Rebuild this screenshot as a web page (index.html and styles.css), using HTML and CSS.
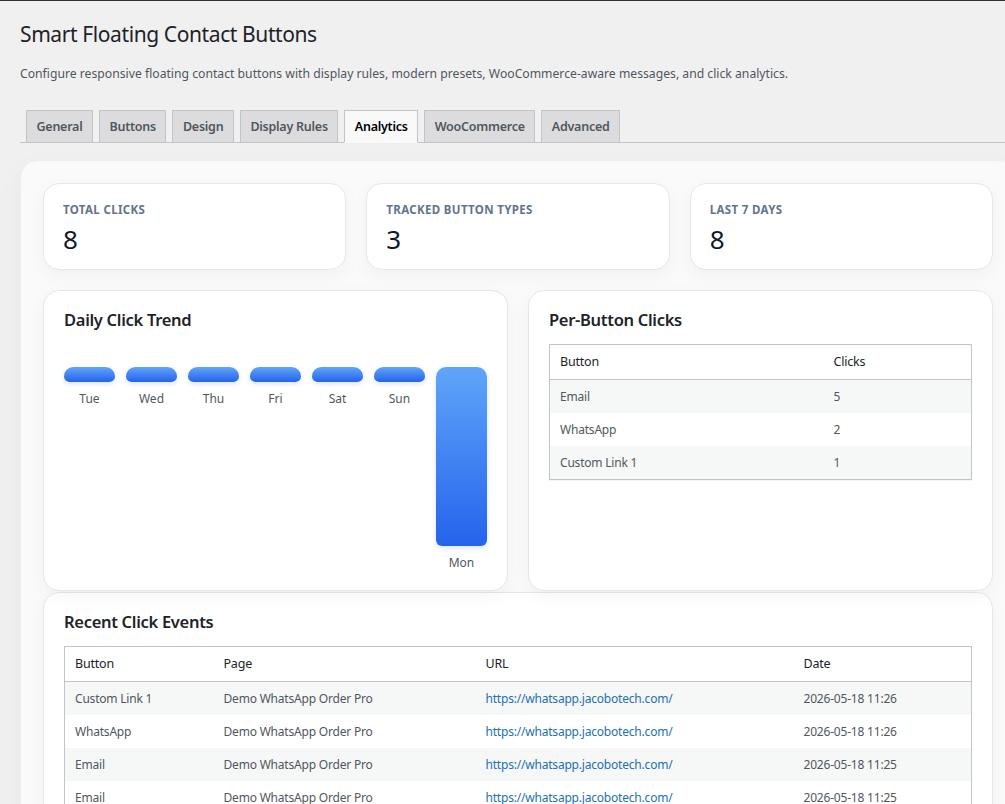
FILE: index.html
```html
<!DOCTYPE html>
<html lang="en">
<head>
    <meta charset="UTF-8">
    <meta name="viewport" content="width=device-width, initial-scale=1.0">
    <title>Smart Floating Contact Buttons</title>
    <link rel="stylesheet" href="styles.css">
</head>
<body>
    <div class="wrap">
        <h1>Smart Floating Contact Buttons</h1>
        <p class="intro">Configure responsive floating contact buttons with display rules, modern presets, WooCommerce-aware messages, and click analytics.</p>

        <nav class="nav-tab-wrapper">
            <a href="#" class="nav-tab">General</a>
            <a href="#" class="nav-tab">Buttons</a>
            <a href="#" class="nav-tab">Design</a>
            <a href="#" class="nav-tab">Display Rules</a>
            <a href="#" class="nav-tab nav-tab-active">Analytics</a>
            <a href="#" class="nav-tab">WooCommerce</a>
            <a href="#" class="nav-tab">Advanced</a>
        </nav>

        <div class="panel">
            <div class="stats">
                <div class="stat-card">
                    <div class="stat-label">Total Clicks</div>
                    <div class="stat-value">8</div>
                </div>
                <div class="stat-card">
                    <div class="stat-label">Tracked Button Types</div>
                    <div class="stat-value">3</div>
                </div>
                <div class="stat-card">
                    <div class="stat-label">Last 7 Days</div>
                    <div class="stat-value">8</div>
                </div>
            </div>

            <div class="two-col">
                <div class="card">
                    <h2>Daily Click Trend</h2>
                    <div class="chart">
                        <div class="chart-col"><div class="bar" style="height: 15px"></div><span>Tue</span></div>
                        <div class="chart-col"><div class="bar" style="height: 15px"></div><span>Wed</span></div>
                        <div class="chart-col"><div class="bar" style="height: 15px"></div><span>Thu</span></div>
                        <div class="chart-col"><div class="bar" style="height: 15px"></div><span>Fri</span></div>
                        <div class="chart-col"><div class="bar" style="height: 15px"></div><span>Sat</span></div>
                        <div class="chart-col"><div class="bar" style="height: 15px"></div><span>Sun</span></div>
                        <div class="chart-col"><div class="bar" style="height: 179px"></div><span>Mon</span></div>
                    </div>
                </div>

                <div class="card">
                    <h2>Per-Button Clicks</h2>
                    <table class="widefat striped per-button">
                        <thead>
                            <tr><th>Button</th><th>Clicks</th></tr>
                        </thead>
                        <tbody>
                            <tr><td>Email</td><td>5</td></tr>
                            <tr><td>WhatsApp</td><td>2</td></tr>
                            <tr><td>Custom Link 1</td><td>1</td></tr>
                        </tbody>
                    </table>
                </div>
            </div>

            <div class="card events">
                <h2>Recent Click Events</h2>
                <table class="widefat striped recent">
                    <thead>
                        <tr><th>Button</th><th>Page</th><th>URL</th><th>Date</th></tr>
                    </thead>
                    <tbody>
                        <tr>
                            <td>Custom Link 1</td>
                            <td>Demo WhatsApp Order Pro</td>
                            <td><a href="#">https://whatsapp.jacobotech.com/</a></td>
                            <td>2026-05-18 11:26</td>
                        </tr>
                        <tr>
                            <td>WhatsApp</td>
                            <td>Demo WhatsApp Order Pro</td>
                            <td><a href="#">https://whatsapp.jacobotech.com/</a></td>
                            <td>2026-05-18 11:26</td>
                        </tr>
                        <tr>
                            <td>Email</td>
                            <td>Demo WhatsApp Order Pro</td>
                            <td><a href="#">https://whatsapp.jacobotech.com/</a></td>
                            <td>2026-05-18 11:25</td>
                        </tr>
                        <tr>
                            <td>Email</td>
                            <td>Demo WhatsApp Order Pro</td>
                            <td><a href="#">https://whatsapp.jacobotech.com/</a></td>
                            <td>2026-05-18 11:25</td>
                        </tr>
                    </tbody>
                </table>
            </div>
        </div>
    </div>
</body>
</html>
```

FILE: styles.css
```css
body, html {
    margin: 0;
    padding: 0;
}
html {
    overflow: hidden;
}
body {
    background: #f0f0f1;
    border-top: 1px solid #2c3338;
    font-family: "Noto Sans", "Segoe UI", sans-serif;
    font-size: 13px;
    color: #3c434a;
    min-height: 803px;
}
.wrap {
    width: 996px;
    margin-left: 20px;
}
h1 {
    margin: 18px 0 0;
    font-size: 21px;
    font-weight: 400;
    line-height: 30px;
    letter-spacing: -0.4px;
    color: #1d2327;
}
.intro {
    margin: 15px 0 0;
    font-size: 12.2px;
    line-height: 20px;
    color: #50575e;
}

/* tabs */
.nav-tab-wrapper {
    display: flex;
    margin-top: 26px;
    border-bottom: 1px solid #c3c4c7;
}
.nav-tab {
    margin-left: 6px;
    margin-bottom: -1px;
    padding: 4px 9.5px;
    border: 1px solid #c3c4c7;
    background: #dcdcde;
    color: #50575e;
    font-size: 12.5px;
    font-weight: 600;
    line-height: 23px;
    letter-spacing: -0.25px;
    text-decoration: none;
}
.nav-tab-active {
    background: #f9f9f9;
    border-bottom-color: #f9f9f9;
    color: #000;
}

/* analytics panel */
.panel {
    margin-top: 17px;
    padding: 22px;
    background: #fafafa;
    border: 1px solid #eceef1;
    border-radius: 18px;
    box-shadow: 0 10px 30px rgba(15, 23, 42, 0.04);
}
.stats {
    display: grid;
    grid-template-columns: repeat(3, 1fr);
    gap: 20px;
}
.stat-card, .card {
    background: #fff;
    border: 1px solid #e2e8f0;
    border-radius: 16px;
    box-shadow: 0 6px 18px rgba(15, 23, 42, 0.04);
}
.stat-card {
    padding: 18px 19px 14px;
}
.stat-label {
    font-size: 11.5px;
    font-weight: 700;
    line-height: 16px;
    letter-spacing: 0.03em;
    text-transform: uppercase;
    color: #64748b;
}
.stat-value {
    margin-top: 6px;
    font-size: 26px;
    line-height: 31px;
    color: #0f172a;
}
.two-col {
    display: grid;
    grid-template-columns: 1fr 1fr;
    gap: 20px;
    margin-top: 20px;
}
.card {
    padding: 17px 20px 18px;
}
.card h2 {
    margin: 0;
    font-size: 16.5px;
    font-weight: 600;
    line-height: 23px;
    letter-spacing: -0.3px;
    color: #1d2327;
}
.events {
    margin-top: 1px;
}

/* bar chart */
.chart {
    display: flex;
    align-items: flex-start;
    gap: 11px;
    margin-top: 36px;
}
.chart-col {
    flex: 1;
    display: flex;
    flex-direction: column;
    align-items: center;
}
.bar {
    width: 100%;
    border-radius: 10px 10px 6px 6px;
    background: linear-gradient(180deg, #60a5fa, #2563eb);
    box-shadow: 0 2px 5px rgba(37, 99, 235, 0.18);
}
.chart-col span {
    margin-top: 8px;
    font-size: 12px;
    line-height: 18px;
    color: #50575e;
}

/* tables */
.widefat {
    width: 100%;
    margin-top: 13px;
    border: 1px solid #c3c4c7;
    border-collapse: collapse;
    table-layout: fixed;
    box-shadow: 0 1px 1px rgba(0, 0, 0, 0.04);
}
.widefat th, .widefat td {
    box-sizing: border-box;
    text-align: left;
    letter-spacing: -0.2px;
}
.widefat th {
    padding: 8px 10px;
    border-bottom: 1px solid #c3c4c7;
    font-size: 12.5px;
    font-weight: 400;
    line-height: 18px;
    color: #1d2327;
}
.widefat td {
    padding: 7px 10px;
    font-size: 12px;
    line-height: 19px;
    color: #50575e;
    white-space: nowrap;
}
.striped tbody tr:nth-child(odd) {
    background: #f6f7f7;
}
.widefat a {
    color: #2271b1;
    text-decoration: none;
}
.per-button th:first-child {
    width: 274px;
}
.recent th:nth-child(1) { width: 149px; }
.recent th:nth-child(2) { width: 262px; }
.recent th:nth-child(3) { width: 318px; }
```
